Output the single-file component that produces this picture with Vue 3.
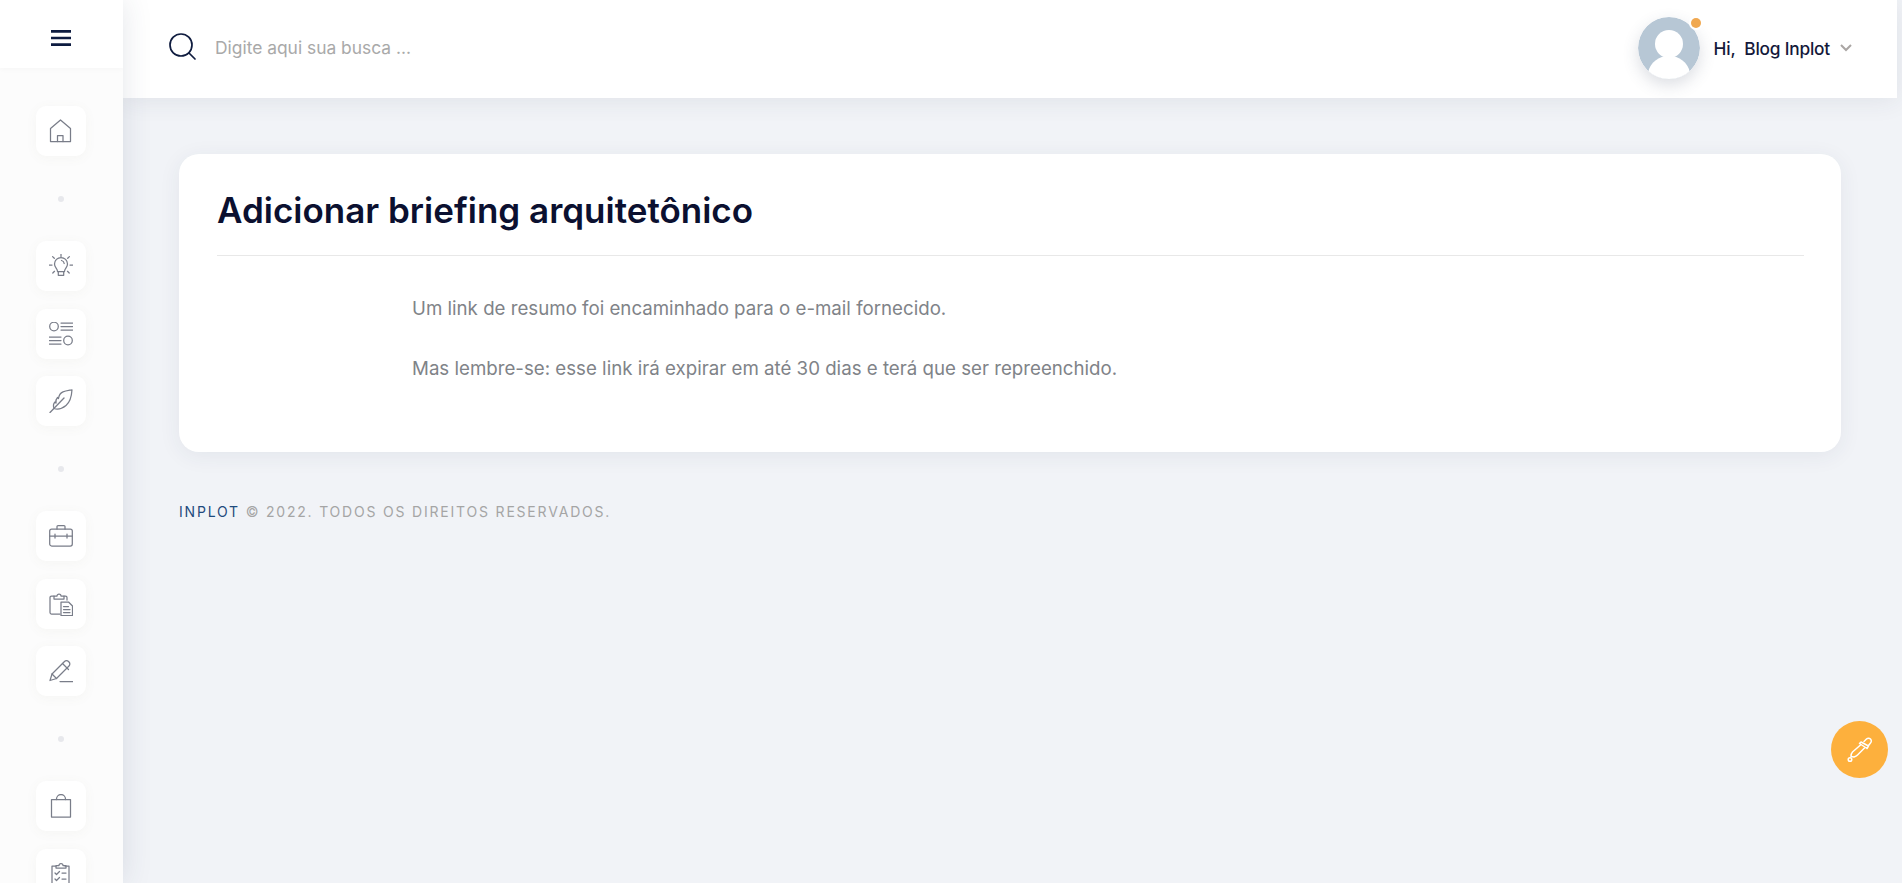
<script setup>
const groups = [
  ['home'],
  ['bulb', 'list', 'feather'],
  ['case', 'clip', 'pen'],
  ['bag', 'check']
]
</script>

<template>
  <div class="page">
    <aside class="sidebar">
      <div class="brand">
        <svg width="20" height="16" viewBox="0 0 20 16" class="burger">
          <path d="M0 1.400h20M0 8h20M0 14.600h20" stroke="#0d1b40" stroke-width="2.700" fill="none" />
        </svg>
      </div>
      <nav class="nav">
        <template v-for="(group, g) in groups" :key="g">
          <div v-if="g > 0" class="sep"><span class="dot"></span></div>
          <a v-for="name in group" :key="name" class="tile">
            <svg width="24" height="24" viewBox="0 0 24 24" class="ico">
              <template v-if="name === 'home'">
                <path d="M1.500 22.500V9.500L11.500 1l10 8.500V22.500Z" />
                <path d="M8.500 22.500V16.500h5.500v6" />
              </template>
              <template v-else-if="name === 'bulb'">
                <path d="M8.500 17.500c0-3-3-3.800-3-7.500a6.500 6.500 0 0 1 13 0c0 3.700-3 4.500-3 7.500Z" />
                <path d="M9.300 17.500v3.800h5.400v-3.800" />
                <path d="M12 0v2.500M3.600 2.600l1.700 1.700M20.400 2.600l-1.700 1.700M0.500 11H3M21 11h2.500M3.800 19l1.700-1.700M20.200 19l-1.700-1.700" />
                <path d="M12.500 6.500c1.500.3 2.500 1.400 2.700 3" />
              </template>
              <template v-else-if="name === 'list'">
                <circle cx="5" cy="4.500" r="4.300" />
                <circle cx="19" cy="18.500" r="4.300" />
                <path d="M12 1h11.500M12 4.500h11.500M12 8h11.500M0.500 15h11.500M0.500 18.500h11.500M0.500 22h11.500" />
              </template>
              <template v-else-if="name === 'feather'">
                <path d="M1 23.500 15 9" />
                <path d="M5 19.500c-1.500-4 0-5.500 1-6.500l1 1c-.5-3 .5-4.500 1.500-5.500l1 1C10 6 11 4 14 2.800 16.500 2 19.500 1.500 23 .8c-.3 5-1.500 12-6 15.700-3.500 2.800-8 4.500-12 3Z" />
              </template>
              <template v-else-if="name === 'case'">
                <rect x="0.700" y="5" width="22.600" height="17" rx="2" />
                <path d="M8 5V2.500a1 1 0 0 1 1-1h6a1 1 0 0 1 1 1V5" />
                <path d="M0.700 12h22.600M6 10v4M18 10v4" />
              </template>
              <template v-else-if="name === 'clip'">
                <path d="M11 22H2.500A1.500 1.500 0 0 1 1 20.500V5.500A1.500 1.500 0 0 1 2.500 4H5" />
                <path d="M15 4h1.500A1.500 1.500 0 0 1 18 5.500V8" />
                <path d="M5 7V4h3a2 2 0 0 1 4 0h3v3Z" />
                <path d="M12 10h7.500l4 4v9.500H12Z" />
                <path d="M14.500 14.500h5M14.500 17.500h6.500M14.500 20.500h6.500" />
              </template>
              <template v-else-if="name === 'pen'">
                <path d="M1 21.500 3 15 15.500 2.500a2.800 2.800 0 0 1 4 0l.5.5a2.800 2.800 0 0 1 0 4L7.500 19.500Z" />
                <path d="M13.500 4.500l6 6M3 15l4.500 4.500" />
                <path d="M11 22.500h13" />
              </template>
              <template v-else-if="name === 'bag'">
                <path d="M2.500 5.500h19V23h-19Z" />
                <path d="M7.500 5.500V5a4.500 4.500 0 0 1 9 0v.5" />
              </template>
              <template v-else>
                <path d="M7 4H3v19.500h17V4h-4" />
                <path d="M7 6V3.500h3a2 2 0 0 1 4 0h3V6Z" />
                <path d="M6 11l1.500 1.500L10.500 9.500M6 17l1.500 1.500L10.500 15.500M13 11h4M13 17h4" />
              </template>
            </svg>
          </a>
        </template>
      </nav>
    </aside>

    <div class="main">
      <header class="topbar">
        <div class="search">
          <svg width="27" height="27" viewBox="0 0 27 27" class="search-ico">
            <circle cx="12" cy="12" r="11" />
            <path d="M20 20l6 6" />
          </svg>
          <span class="placeholder">Digite aqui sua busca ...</span>
        </div>
        <div class="user">
          <div class="avatar-wrap">
            <div class="avatar">
              <svg width="62" height="62" viewBox="0 0 62 62">
                <circle cx="31" cy="31" r="31" fill="#b7c7d5" />
                <circle cx="31" cy="27" r="14" fill="#fff" />
                <path d="M10 56c2-11 11-17 21-17s19 6 21 17a31 31 0 0 1-42 0Z" fill="#fff" />
              </svg>
            </div>
            <span class="status"></span>
          </div>
          <span class="hi">Hi,&nbsp; Blog Inplot</span>
          <svg width="12" height="8" viewBox="0 0 12 8" class="chev">
            <path d="M1 1l5 5 5-5" />
          </svg>
        </div>
      </header>

      <main class="content">
        <section class="card">
          <h1 class="title">Adicionar briefing arquitetônico</h1>
          <div class="body">
            <p>Um link de resumo foi encaminhado para o e-mail fornecido.</p>
            <p>Mas lembre-se: esse link irá expirar em até 30 dias e terá que ser repreenchido.</p>
          </div>
        </section>
        <footer class="foot"><span class="brandname">INPLOT</span> © 2022. TODOS OS DIREITOS RESERVADOS.</footer>
      </main>
    </div>

    <a class="fab">
      <svg width="30" height="30" viewBox="0 0 30 30" class="fab-ico">
        <path d="M19 6.500l2.500-2.500a2.800 2.800 0 0 1 4 4L23.500 10.500" />
        <path d="M16 7l7.500 4-1.500 2.500-7.500-5Z" />
        <path d="M15.500 10l-8 7c-1 1-1.500 2.500-1.500 4.500l3 .5c1.500-.5 2.500-1 3.500-2l7-7" />
        <circle cx="5" cy="24.500" r="1.800" />
      </svg>
    </a>
  </div>
</template>

<style>
html, body { margin: 0; padding: 0; overflow: hidden; }
</style>

<style scoped>
.page {
  display: flex;
  height: 883px;
  overflow: hidden;
  background: #f1f3f7;
  font-family: Inter, "Liberation Sans", sans-serif;
}
.sidebar {
  width: 123px;
  flex: none;
  background: #fcfcfc;
  box-shadow: 0 0 28px rgba(50, 60, 90, 0.13);
  position: relative;
  z-index: 3;
  overflow: hidden;
}
.brand {
  height: 68px;
  background: #fff;
  box-shadow: 0 1px 6px rgba(0, 0, 0, 0.03);
  display: flex;
  align-items: center;
  justify-content: center;
  padding: 8px 2px 0 0;
  box-sizing: border-box;
}
.burger { display: block; }
.nav {
  display: flex;
  flex-direction: column;
  align-items: center;
  gap: 17.5px;
  padding: 38px 2px 0 0;
}
.tile {
  width: 50px;
  height: 50px;
  flex: none;
  border-radius: 10px;
  background: #fff;
  box-shadow: 0 2px 12px rgba(120, 110, 80, 0.05);
  display: flex;
  align-items: center;
  justify-content: center;
}
.ico {
  fill: none;
  stroke: #797d89;
  stroke-width: 1.250;
  stroke-linecap: round;
  stroke-linejoin: round;
}
.sep {
  height: 50px;
  flex: none;
  display: flex;
  align-items: center;
}
.dot {
  width: 6px;
  height: 6px;
  border-radius: 50%;
  background: #e7e8ec;
}
.main {
  flex: 1;
  min-width: 0;
  display: flex;
  flex-direction: column;
}
.topbar {
  height: 98px;
  flex: none;
  box-sizing: border-box;
  margin-right: 5px;
  background: #fff;
  box-shadow: 0 2px 24px rgba(40, 50, 80, 0.09);
  display: flex;
  align-items: center;
  justify-content: space-between;
  padding: 0 45px 2px 46px;
  position: relative;
  z-index: 2;
}
.search {
  display: flex;
  align-items: center;
  gap: 19px;
}
.search-ico {
  fill: none;
  stroke: #0f1c3f;
  stroke-width: 1.700;
  stroke-linecap: round;
  margin-top: -4px;
}
.placeholder {
  font-size: 17.400px;
  color: #a9a9a9;
  margin-top: -2px;
}
.user {
  display: flex;
  align-items: center;
}
.avatar-wrap {
  position: relative;
  width: 62px;
  height: 62px;
  margin-right: 14px;
}
.avatar {
  width: 62px;
  height: 62px;
  border-radius: 50%;
  overflow: hidden;
  box-shadow: 0 6px 16px rgba(60, 70, 100, 0.18);
}
.avatar svg { display: block; }
.status {
  position: absolute;
  top: 1px;
  right: -1px;
  width: 10px;
  height: 10px;
  border-radius: 50%;
  background: #f0a850;
  box-shadow: 0 0 0 2px #fff;
}
.hi {
  font-size: 17.300px;
  font-weight: 500;
  color: #14193a;
  letter-spacing: -0.2px;
  white-space: nowrap;
}
.chev {
  margin-left: 10px;
  fill: none;
  stroke: #aaa6a4;
  stroke-width: 2;
}
.content {
  padding: 56px 61px 0 56px;
}
.card {
  height: 298px;
  box-sizing: border-box;
  background: #fff;
  border-radius: 20px;
  box-shadow: 0 4px 22px rgba(40, 50, 80, 0.07);
  padding: 0 37px 0 38px;
}
.title {
  margin: 0;
  height: 102px;
  box-sizing: border-box;
  padding-top: 10px;
  display: flex;
  align-items: center;
  border-bottom: 1px solid #e8e8e8;
  font-size: 35px;
  font-weight: 600;
  color: #0b1030;
}
.body {
  padding: 41px 0 0 195px;
}
.body p {
  margin: 0 0 36px;
  font-size: 18.700px;
  line-height: 24px;
  color: #808388;
}
.foot {
  margin-top: 51px;
  font-size: 14px;
  line-height: 18px;
  letter-spacing: 1.800px;
  color: #a5a5a5;
}
.brandname { color: #1f4b7d; }
.fab {
  position: fixed;
  left: 1831px;
  top: 721px;
  width: 57px;
  height: 57px;
  border-radius: 50%;
  background: #fdb03d;
  display: flex;
  align-items: center;
  justify-content: center;
  z-index: 5;
}
.fab-ico {
  fill: none;
  stroke: #fff;
  stroke-width: 1.500;
  stroke-linejoin: round;
  stroke-linecap: round;
}
</style>
